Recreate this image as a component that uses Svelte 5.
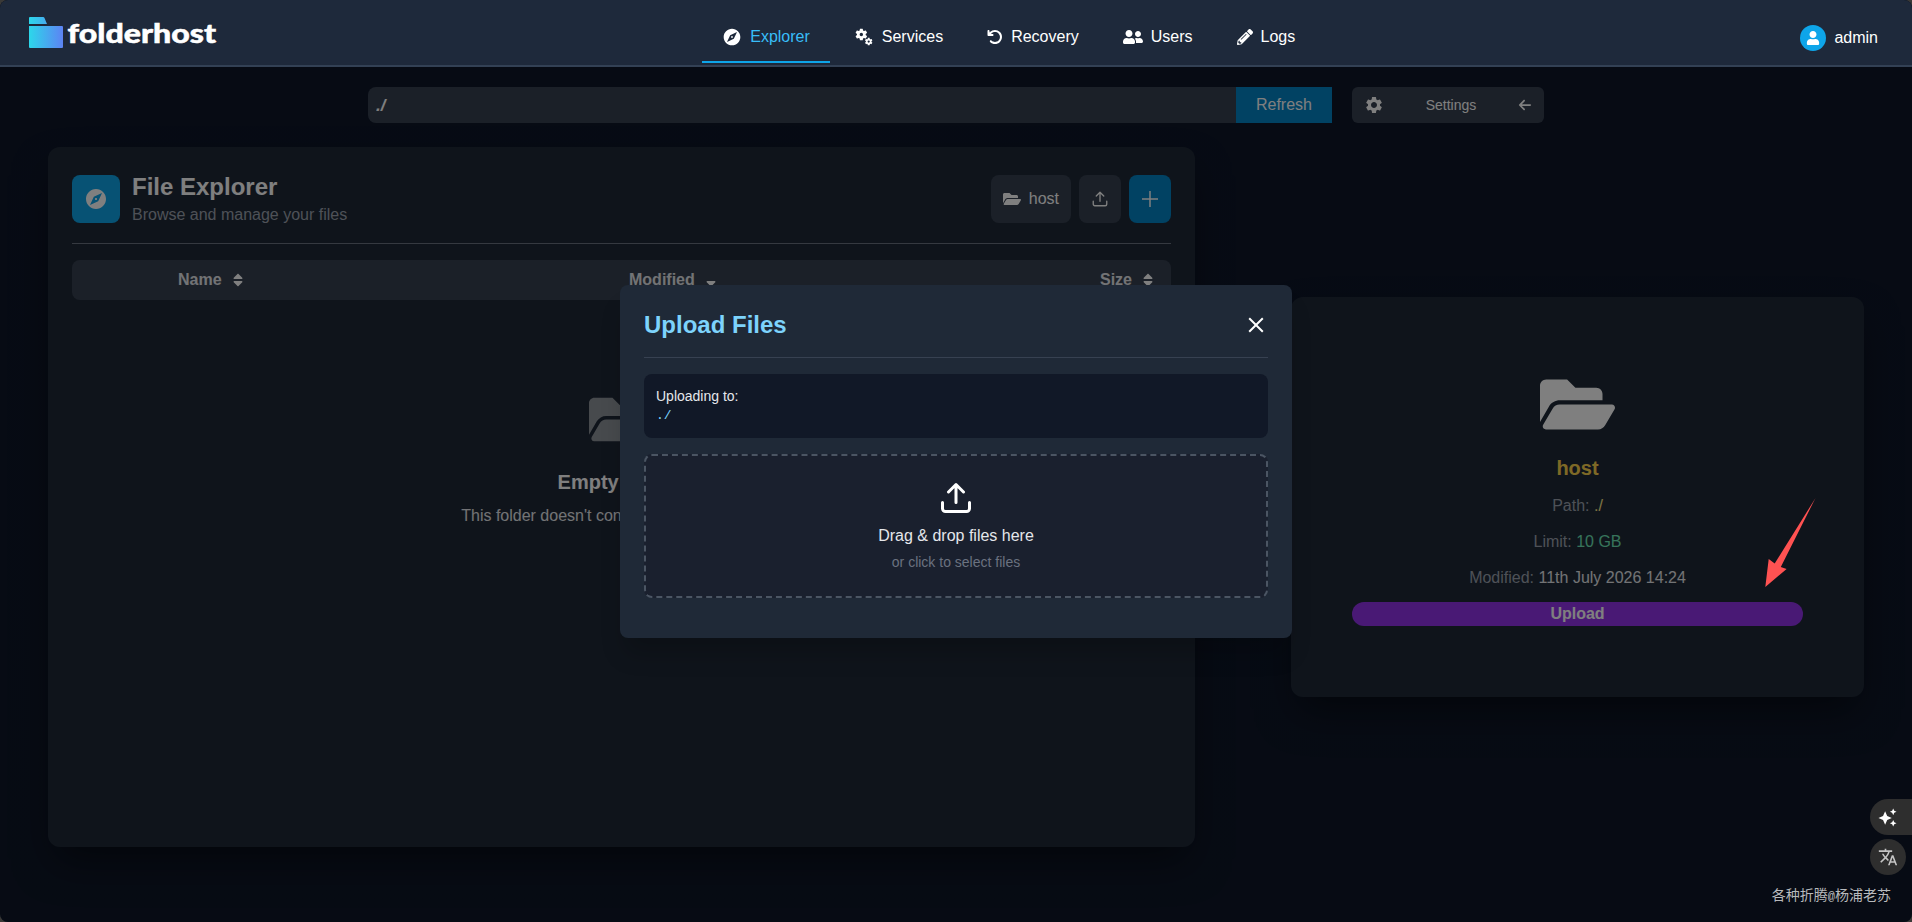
<script lang="ts">
  type Icon = { box: string; d: string };

  const icons: Record<string, Icon> = {
    compass: {
      box: '0 0 24 24',
      d: 'M12 10.9c-.61 0-1.1.49-1.1 1.1s.49 1.1 1.1 1.1c.61 0 1.1-.49 1.1-1.1s-.49-1.1-1.1-1.1zM12 2C6.48 2 2 6.48 2 12s4.48 10 10 10 10-4.48 10-10S17.52 2 12 2zm2.19 12.19L6 18l3.81-8.19L18 6l-3.81 8.19z'
    },
    services: {
      box: '0 0 24 24',
      d: 'M14.17 13.71l1.4-2.42c.09-.15.05-.34-.08-.45l-1.48-1.16c.03-.22.05-.45.05-.68s-.02-.46-.05-.69l1.48-1.16c.13-.11.17-.3.08-.45l-1.4-2.42c-.09-.15-.27-.21-.43-.15l-1.74.7c-.36-.28-.75-.51-1.18-.69l-.26-1.85a.364.364 0 00-.35-.29h-2.8c-.17 0-.32.13-.35.3L6.8 4.15c-.42.18-.82.41-1.18.69l-1.74-.7c-.16-.06-.34 0-.43.15l-1.4 2.42c-.09.15-.05.34.08.45l1.48 1.16c-.03.22-.05.45-.05.68s.02.46.05.69l-1.48 1.16c-.13.11-.17.3-.08.45l1.4 2.42c.09.15.27.21.43.15l1.74-.7c.36.28.75.51 1.18.69l.26 1.85c.03.16.18.29.35.29h2.8c.17 0 .32-.13.35-.3l.26-1.85c.42-.18.82-.41 1.18-.69l1.74.7c.16.06.34 0 .43-.15zM8.81 11c-1.1 0-2-.9-2-2s.9-2 2-2 2 .9 2 2-.9 2-2 2zM21.92 18.67l-.96-.74c.02-.14.04-.29.04-.44 0-.15-.01-.3-.04-.44l.95-.74c.08-.07.11-.19.05-.29l-.9-1.55c-.05-.1-.17-.13-.28-.1l-1.11.45c-.23-.18-.48-.33-.76-.44l-.17-1.18a.216.216 0 00-.21-.2h-1.79c-.11 0-.21.08-.22.19l-.17 1.18c-.27.12-.53.26-.76.44l-1.11-.45a.23.23 0 00-.28.1l-.9 1.55c-.05.1-.04.22.05.29l.95.74a3.145 3.145 0 000 .88l-.95.74c-.08.07-.11.19-.05.29l.9 1.55c.05.1.17.13.28.1l1.11-.45c.23.18.48.33.76.44l.17 1.18c.02.11.11.19.22.19h1.79c.11 0 .21-.08.22-.19l.17-1.18c.27-.12.53-.26.75-.44l1.12.45c.1.04.22 0 .28-.1l.9-1.55c.06-.09.03-.21-.05-.28zm-4.29.16a1.35 1.35 0 11.001-2.701 1.35 1.35 0 01-.001 2.701z'
    },
    undo: {
      box: '0 0 512 512',
      d: 'M125.7 160H176c17.7 0 32 14.3 32 32s-14.3 32-32 32H48c-17.7 0-32-14.3-32-32V64c0-17.7 14.3-32 32-32s32 14.3 32 32v51.2L97.6 97.6c87.5-87.5 229.3-87.5 316.8 0s87.5 229.3 0 316.8s-229.3 87.5-316.8 0c-12.5-12.5-12.5-32.8 0-45.3s32.8-12.5 45.3 0c62.5 62.5 163.8 62.5 226.3 0s62.5-163.8 0-226.3s-163.8-62.5-226.3 0L125.7 160z'
    },
    users: {
      box: '0 0 640 512',
      d: 'M192 256c61.9 0 112-50.1 112-112S253.9 32 192 32 80 82.1 80 144s50.1 112 112 112zm76.8 32h-8.3c-20.8 10-43.9 16-68.5 16s-47.6-6-68.5-16h-8.3C51.6 288 0 339.6 0 403.2V432c0 26.5 21.5 48 48 48h288c26.5 0 48-21.5 48-48v-28.8c0-63.6-51.6-115.2-115.2-115.2zM480 256c53 0 96-43 96-96s-43-96-96-96-96 43-96 96 43 96 96 96zm48 32h-3.8c-13.9 4.8-28.6 8-44.2 8s-30.3-3.2-44.2-8H432c-20.4 0-39.2 5.9-55.7 15.4 24.4 26.3 39.7 61.2 39.7 99.8v38.4c0 2.2-.5 4.3-.6 6.4H592c26.5 0 48-21.5 48-48 0-61.9-50.1-112-112-112z'
    },
    pencil: {
      box: '0 0 512 512',
      d: 'M497.9 142.1l-46.1 46.1c-4.7 4.7-12.3 4.7-17 0l-111-111c-4.7-4.7-4.7-12.3 0-17l46.1-46.1c18.7-18.7 49.1-18.7 67.9 0l60.1 60.1c18.8 18.7 18.8 49.1 0 67.9zM284.2 99.8L21.6 362.4.4 483.9c-2.9 16.4 11.4 30.6 27.8 27.8l121.5-21.3 262.6-262.6c4.7-4.7 4.7-12.3 0-17l-111-111c-4.8-4.7-12.4-4.7-17.1 0zM124.1 339.9c-5.5-5.5-5.5-14.3 0-19.8l154-154c5.5-5.5 14.3-5.5 19.8 0s5.5 14.3 0 19.8l-154 154c-5.5 5.5-14.3 5.5-19.8 0zM88 424h48v36.3l-64.5 11.3-31.1-31.1L51.7 376H88v48z'
    },
    user: {
      box: '0 0 448 512',
      d: 'M224 256c70.7 0 128-57.3 128-128S294.7 0 224 0 96 57.3 96 128s57.3 128 128 128zm89.6 32h-16.7c-22.2 10.2-46.9 16-72.9 16s-50.6-5.8-72.9-16h-16.7C60.2 288 0 348.2 0 422.4V464c0 26.5 21.5 48 48 48h352c26.5 0 48-21.5 48-48v-41.6c0-74.2-60.2-134.4-134.4-134.4z'
    },
    gear: {
      box: '0 0 24 24',
      d: 'M19.14 12.94c.04-.3.06-.61.06-.94 0-.32-.02-.64-.07-.94l2.03-1.58a.49.49 0 00.12-.61l-1.92-3.32a.488.488 0 00-.59-.22l-2.39.96c-.5-.38-1.03-.7-1.62-.94l-.36-2.54a.484.484 0 00-.48-.41h-3.84c-.24 0-.43.17-.47.41l-.36 2.54c-.59.24-1.13.57-1.62.94l-2.39-.96c-.22-.08-.47 0-.59.22L2.74 8.87c-.12.21-.08.47.12.61l2.03 1.58c-.05.3-.09.63-.09.94s.02.64.07.94l-2.03 1.58a.49.49 0 00-.12.61l1.92 3.32c.12.22.37.29.59.22l2.39-.96c.5.38 1.03.7 1.62.94l.36 2.54c.05.24.24.41.48.41h3.84c.24 0 .44-.17.47-.41l.36-2.54c.59-.24 1.13-.56 1.62-.94l2.39.96c.22.08.47 0 .59-.22l1.92-3.32c.12-.22.07-.47-.12-.61l-2.01-1.58zM12 15.6c-1.98 0-3.6-1.62-3.6-3.6s1.62-3.6 3.6-3.6 3.6 1.62 3.6 3.6-1.62 3.6-3.6 3.6z'
    },
    arrowLeft: {
      box: '0 0 448 512',
      d: 'M9.4 233.4c-12.5 12.5-12.5 32.8 0 45.3l160 160c12.5 12.5 32.8 12.5 45.3 0s12.5-32.8 0-45.3L109.2 288 416 288c17.7 0 32-14.3 32-32s-14.3-32-32-32l-306.7 0L214.6 118.6c12.5-12.5 12.5-32.8 0-45.3s-32.8-12.5-45.3 0l-160 160z'
    },
    folder: {
      box: '0 0 576 512',
      d: 'M572.694 292.093L500.27 416.248A63.997 63.997 0 0 1 444.989 448H45.025c-18.523 0-30.064-20.093-20.731-36.093l72.424-124.155A64 64 0 0 1 152 256h399.964c18.523 0 30.064 20.093 20.73 36.093zM152 224h328v-48c0-26.51-21.49-48-48-48H272l-64-64H48C21.49 64 0 85.49 0 112v278.046l69.077-118.418C86.214 242.25 117.989 224 152 224z'
    },
    sort: {
      box: '0 0 320 512',
      d: 'M41 288h238c21.4 0 32.1 25.9 17 41L177 448c-9.4 9.4-24.6 9.4-33.9 0L24 329c-15.1-15.1-4.4-41 17-41zm255-105L177 64c-9.4-9.4-24.6-9.4-33.9 0L24 183c-15.1 15.1-4.4 41 17 41h238c21.4 0 32.1-25.9 17-41z'
    },
    sortDown: {
      box: '0 0 320 512',
      d: 'M41 288h238c21.4 0 32.1 25.9 17 41L177 448c-9.4 9.4-24.6 9.4-33.9 0L24 329c-15.1-15.1-4.4-41 17-41z'
    },
    sparkles: {
      box: '0 0 20 20',
      d: 'M7.5 3.5l2.2 4.8 4.8 2.2-4.8 2.2-2.2 4.8-2.2-4.8L.5 10.5l4.8-2.2zM16 .5l1.1 2.4 2.4 1.1-2.4 1.1L16 7.500l-1.1-2.4L12.500 4l2.4-1.1zM16 12.500l1.1 2.400 2.400 1.100-2.400 1.100L16 19.500l-1.100-2.400-2.400-1.100 2.400-1.100z'
    },
    translate: {
      box: '0 0 24 24',
      d: 'M12.87 15.07l-2.54-2.51.03-.03A17.52 17.52 0 0014.07 6H17V4h-7V2H8v2H1v1.99h11.17C11.5 7.92 10.44 9.75 9 11.35 8.07 10.32 7.3 9.19 6.69 8h-2c.73 1.63 1.73 3.17 2.98 4.56l-5.09 5.02L4 19l5-5 3.11 3.11.76-2.04zM18.5 10h-2L12 22h2l1.12-3h4.75L21 22h2l-4.5-12zm-2.62 7l1.62-4.33L19.12 17h-3.24z'
    }
  };

  const links = [
    { label: 'Explorer', icon: 'compass', size: 20 },
    { label: 'Services', icon: 'services', size: 20 },
    { label: 'Recovery', icon: 'undo', size: 16 },
    { label: 'Users', icon: 'users', size: 20 },
    { label: 'Logs', icon: 'pencil', size: 16 }
  ];

  const columns = [
    { label: 'Name', icon: 'sort' },
    { label: 'Modified', icon: 'sortDown' },
    { label: 'Size', icon: 'sort' }
  ];

  const details = [
    { label: 'Path:', value: './', kind: 'path' },
    { label: 'Limit:', value: '10 GB', kind: 'limit' },
    { label: 'Modified:', value: '11th July 2026 14:24', kind: 'date' }
  ];

  let active = $state('Explorer');
  let path = $state('./');
  let showUpload = $state(true);
</script>

{#snippet icon(name: string, size: number)}
  <svg class="icon" viewBox={icons[name].box} width={size} height={size} fill="currentColor" aria-hidden="true">
    <path d={icons[name].d} />
  </svg>
{/snippet}

{#snippet uploadIcon(size: number, stroke: number)}
  <svg class="icon" viewBox="0 0 24 24" width={size} height={size} fill="none" stroke="currentColor" stroke-width={stroke} stroke-linecap="round" stroke-linejoin="round" aria-hidden="true">
    <path d="M21 15v4a2 2 0 0 1-2 2H5a2 2 0 0 1-2-2v-4M17 8l-5-5-5 5M12 3v12" />
  </svg>
{/snippet}

<div class="app">
  <header>
    <div class="logo">
      <svg width="200" height="40" viewBox="0 0 200 40" role="img" aria-label="folderhost">
        <defs>
          <linearGradient id="brand" gradientUnits="userSpaceOnUse" x1="5" y1="0" x2="39" y2="0">
            <stop offset="0" stop-color="#2cd7ea" />
            <stop offset="1" stop-color="#5d83f4" />
          </linearGradient>
        </defs>
        <path fill="url(#brand)" d="M6 4h13.2q.8 0 1.2.8l2.6 6.200H5V5q0-1 1-1zM5 13h33q1 0 1 1v20q0 1-1 1H6q-1 0-1-1z" />
        <text x="43.500" y="29.500" textLength="148.500" lengthAdjust="spacingAndGlyphs">folderhost</text>
      </svg>
    </div>
    <nav>
      {#each links as link}
        <button class="nav-link" class:active={active === link.label} onclick={() => (active = link.label)}>
          {@render icon(link.icon, link.size)}
          <span>{link.label}</span>
        </button>
      {/each}
    </nav>
    <div class="user">
      <span class="avatar">{@render icon('user', 14)}</span>
      <span>admin</span>
    </div>
  </header>

  <main>
    <div class="toolbar">
      <div class="path-bar">
        <input bind:value={path} aria-label="Path" />
        <button class="refresh">Refresh</button>
      </div>
      <button class="settings">
        {@render icon('gear', 20)}
        <span>Settings</span>
        {@render icon('arrowLeft', 14)}
      </button>
    </div>

    <div class="panels">
      <section class="card explorer">
        <div class="explorer-head">
          <div class="tile">{@render icon('compass', 24)}</div>
          <div class="titles">
            <h1>File Explorer</h1>
            <p>Browse and manage your files</p>
          </div>
          <div class="actions">
            <button class="action">{@render icon('folder', 18)} host</button>
            <button class="action" aria-label="Upload" onclick={() => (showUpload = true)}>
              {@render uploadIcon(18, 1.8)}
            </button>
            <button class="action primary" aria-label="New">
              <svg class="icon" viewBox="0 0 18 18" width="18" height="18" stroke="currentColor" stroke-width="1.5">
                <path d="M9 1v16M1 9h16" />
              </svg>
            </button>
          </div>
        </div>

        <div class="table-head">
          {#each columns as column}
            <span class="column">{column.label} {@render icon(column.icon, 16)}</span>
          {/each}
        </div>

        <div class="empty">
          <div class="empty-icon">{@render icon('folder', 65)}</div>
          <h2>Empty Folder</h2>
          <p>This folder doesn't contain any files or folders</p>
        </div>
      </section>

      <aside class="card info">
        {@render icon('folder', 75)}
        <h2>host</h2>
        {#each details as row}
          <p>{row.label} <span class={row.kind}>{row.value}</span></p>
        {/each}
        <button class="upload" onclick={() => (showUpload = true)}>Upload</button>
      </aside>
    </div>
  </main>

  {#if showUpload}
    <div class="overlay">
      <div class="modal" role="dialog" aria-label="Upload Files">
        <div class="modal-head">
          <h2>Upload Files</h2>
          <button class="close" aria-label="Close" onclick={() => (showUpload = false)}>
            <svg class="icon" viewBox="0 0 24 24" width="24" height="24" stroke="currentColor" stroke-width="2">
              <path d="M5.2 5.2l13.6 13.6M18.8 5.2L5.2 18.8" />
            </svg>
          </button>
        </div>
        <div class="target">
          <p>Uploading to:</p>
          <code>{path}</code>
        </div>
        <div class="dropzone">
          {@render uploadIcon(36, 2)}
          <p class="drop-title">Drag &amp; drop files here</p>
          <p class="drop-hint">or click to select files</p>
        </div>
      </div>
    </div>
  {/if}

  <svg class="pointer" width="52" height="90" viewBox="0 0 52 90" aria-hidden="true">
    <path fill="#ff5252" d="M50.5 0L15.8 69l5.8 2L.3 89l3.4-28 6 4.500z" />
  </svg>

  <div class="floating">
    <button class="float-tab" aria-label="Assistant">{@render icon('sparkles', 19)}</button>
    <button class="float-round" aria-label="Translate">{@render icon('translate', 20)}</button>
  </div>

  <div class="watermark">各种折腾<span>@</span>杨浦老苏</div>
</div>

<style>
  :global(body) {
    margin: 0;
    background: #3a3937;
  }

  .app {
    position: relative;
    height: 922px;
    overflow: hidden;
    border-radius: 8px;
    background: linear-gradient(#0e1629, #0e1728);
    color: #fff;
    font-family: 'Liberation Sans', Arial, sans-serif;
    font-size: 16px;
    line-height: 24px;
  }

  h1, h2, p { margin: 0; }

  button {
    border: 0;
    padding: 0;
    background: none;
    color: inherit;
    font: inherit;
    cursor: pointer;
  }

  .icon { display: block; flex-shrink: 0; }

  header {
    position: relative;
    z-index: 2;
    box-sizing: border-box;
    height: 67px;
    padding: 0 24px;
    display: flex;
    justify-content: space-between;
    background: #1e293b;
    border-bottom: 2px solid #334155;
  }

  .logo { width: 201px; padding-top: 13px; }
  .logo svg { display: block; }
  .logo text {
    font-family: Lato, sans-serif;
    font-size: 26.5px;
    font-weight: 900;
    fill: #fff;
    stroke: #fff;
    stroke-width: 0.5px;
  }

  nav { display: flex; gap: 4px; padding-top: 11px; }

  .nav-link {
    box-sizing: border-box;
    height: 52px;
    padding: 2px 20px 0;
    display: flex;
    align-items: center;
    gap: 8px;
    border-bottom: 2px solid transparent;
  }
  .nav-link span { margin-top: -1px; }
  .nav-link.active { border-color: #0ea5e9; }
  .nav-link.active span { color: #38bdf8; }

  .user {
    display: flex;
    align-items: center;
    gap: 8px;
    padding: 10px 10px 0 8px;
  }

  .avatar {
    width: 26px;
    height: 26px;
    border-radius: 50%;
    background: #0ea5e9;
    display: flex;
    align-items: center;
    justify-content: center;
  }

  main {
    padding: 20px 48px 0;
    display: flex;
    flex-direction: column;
    gap: 24px;
  }

  .toolbar { display: flex; justify-content: center; gap: 20px; }

  .path-bar {
    width: 964px;
    height: 36px;
    display: flex;
  }
  .path-bar input {
    flex: 1;
    min-width: 0;
    border: 0;
    padding: 2px 8px 0;
    border-radius: 8px 0 0 8px;
    background: #374151;
    color: #fff;
    font: italic 700 17px 'Liberation Sans', Arial, sans-serif;
  }
  .refresh { padding: 0 20px; background: #0284c7; }

  .settings {
    width: 192px;
    padding: 0 12px;
    display: flex;
    align-items: center;
    justify-content: space-between;
    border-radius: 6px;
    background: #374151;
    font-size: 14px;
  }

  .panels { display: flex; align-items: center; gap: 96px; }

  .card {
    box-sizing: border-box;
    border-radius: 12px;
    background: #1f2937;
    box-shadow: 0 20px 40px -8px rgba(0, 0, 0, 0.5);
  }

  .explorer { flex: 1; height: 700px; padding: 24px; }

  .explorer-head {
    display: flex;
    align-items: center;
    gap: 12px;
    padding-bottom: 16px;
    margin-bottom: 16px;
    border-bottom: 1px solid #6b7280;
  }

  .tile {
    width: 48px;
    height: 48px;
    border-radius: 8px;
    background: #0ea5e9;
    display: flex;
    align-items: center;
    justify-content: center;
  }

  .titles { flex: 1; }
  .titles h1 { font-size: 24px; line-height: 32px; }
  .titles p { color: #9ca3af; }

  .actions { display: flex; gap: 8px; }

  .action {
    height: 48px;
    padding: 0 12px;
    display: flex;
    align-items: center;
    gap: 8px;
    border-radius: 8px;
    background: #374151;
  }
  .action.primary { background: #0284c7; }

  .table-head {
    height: 40px;
    padding: 0 15px 0 106px;
    display: grid;
    grid-template-columns: 451px 1fr auto;
    align-items: center;
    border-radius: 8px;
    background: #374151;
    font-weight: 700;
    color: #e5e7eb;
  }
  .column { display: flex; align-items: center; gap: 8px; }
  .column .icon { color: #fff; }

  .empty {
    padding-top: 87px;
    display: flex;
    flex-direction: column;
    align-items: center;
  }
  .empty-icon { opacity: 0.5; margin-bottom: 16px; }
  .empty h2 { font-size: 20px; line-height: 28px; margin-bottom: 8px; }
  .empty p { color: #e5e7eb; }

  .info {
    width: 573px;
    height: 400px;
    padding: 0 61px 2px;
    display: flex;
    flex-direction: column;
    align-items: center;
    justify-content: center;
    gap: 12px;
  }
  .info h2 { font-size: 20px; line-height: 28px; color: #fcd34d; }
  .info p { color: #9ca3af; }
  .path { color: #fde68a; }
  .limit { color: #6ee7b7; }
  .date { color: #e5e7eb; }

  .upload {
    width: 100%;
    height: 24px;
    border-radius: 12px;
    background: #9333ea;
    font-weight: 700;
  }

  .overlay {
    position: absolute;
    inset: 0;
    z-index: 1;
    display: flex;
    align-items: center;
    justify-content: center;
    background: rgba(0, 0, 0, 0.5);
  }

  .modal {
    box-sizing: border-box;
    width: 672px;
    padding: 24px 24px 40px;
    border-radius: 8px;
    background: #1f2937;
    box-shadow: 0 20px 25px -5px rgba(0, 0, 0, 0.2);
  }

  .modal-head {
    display: flex;
    align-items: center;
    justify-content: space-between;
    padding-bottom: 16px;
    border-bottom: 1px solid #374151;
  }
  .modal-head h2 { font-size: 24px; line-height: 32px; color: #7dd3fc; }

  .target {
    margin: 16px 0;
    padding: 12px;
    border-radius: 8px;
    background: #111827;
    color: #e5e7eb;
    font-size: 14px;
    line-height: 20px;
  }
  .target code {
    display: block;
    color: #7dd3fc;
    font-family: 'Liberation Mono', monospace;
    font-size: 13px;
  }

  .dropzone {
    padding: 24px;
    display: flex;
    flex-direction: column;
    align-items: center;
    border: 2px dashed #4b5563;
    border-radius: 8px;
    background: #1a202e;
  }
  .drop-title { margin: 8px 0 4px; color: #e5e7eb; }
  .drop-hint { font-size: 14px; line-height: 20px; color: #6b7280; }

  .pointer { position: absolute; z-index: 3; left: 1765px; top: 498px; }

  .floating {
    position: absolute;
    z-index: 3;
    right: 0;
    top: 799px;
    display: flex;
    flex-direction: column;
    gap: 4px;
  }
  .float-tab, .float-round {
    box-sizing: border-box;
    height: 36px;
    padding-left: 8px;
    background: #2e2e2e;
  }
  .float-tab { width: 42px; border-radius: 18px 0 0 18px; }
  .float-round { width: 36px; border-radius: 50%; color: #c4c4c4; }

  .watermark {
    position: absolute;
    z-index: 3;
    right: 21px;
    bottom: 16px;
    color: #b8babd;
    font: 14px/24px 'Noto Sans CJK SC', sans-serif;
  }
  .watermark span { font: 12px 'Liberation Mono', monospace; }
</style>
